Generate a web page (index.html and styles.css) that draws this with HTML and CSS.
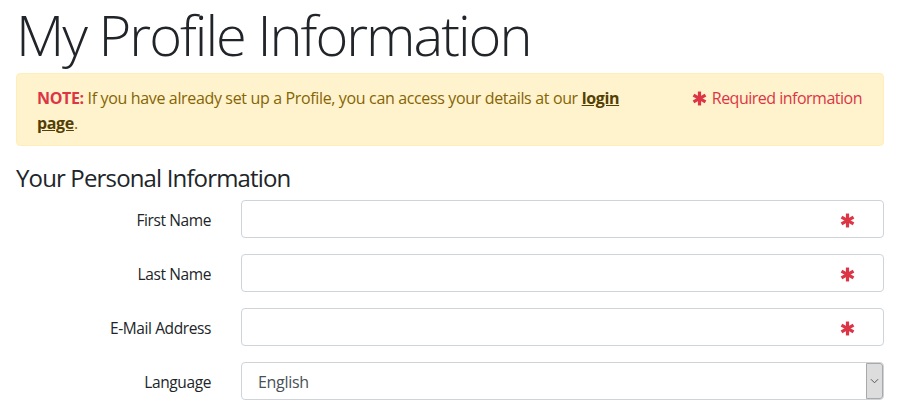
FILE: index.html
```html
<!DOCTYPE html>
<html lang="en">
<head>
<meta charset="utf-8">
<title>My Profile Information</title>
<link rel="stylesheet" href="styles.css">
</head>
<body>
<main class="page">
  <h1 class="title">My Profile Information</h1>

  <div class="alert">
    <p class="alert-note"><strong class="note-label">NOTE:</strong> If you have already set up a Profile, you can access your details at our <a href="#" class="alert-link">login page</a>.</p>
    <p class="alert-req">
      <svg class="star star-sm" viewBox="0 0 14 14" aria-hidden="true"><g stroke="currentColor" stroke-width="3"><line x1="7" y1="0.5" x2="7" y2="13.5"/><line x1="1.4" y1="3.75" x2="12.6" y2="10.25"/><line x1="1.4" y1="10.25" x2="12.6" y2="3.75"/></g></svg>Required information
    </p>
  </div>

  <h2 class="section-title">Your Personal Information</h2>

  <form class="form">
    <div class="form-row">
      <label class="form-label" for="first">First Name</label>
      <div class="field">
        <input class="control" id="first" type="text">
        <svg class="star star-field" viewBox="0 0 14 14" aria-hidden="true"><g stroke="currentColor" stroke-width="3"><line x1="7" y1="0.5" x2="7" y2="13.5"/><line x1="1.4" y1="3.75" x2="12.6" y2="10.25"/><line x1="1.4" y1="10.25" x2="12.6" y2="3.75"/></g></svg>
      </div>
    </div>
    <div class="form-row">
      <label class="form-label" for="last">Last Name</label>
      <div class="field">
        <input class="control" id="last" type="text">
        <svg class="star star-field" viewBox="0 0 14 14" aria-hidden="true"><g stroke="currentColor" stroke-width="3"><line x1="7" y1="0.5" x2="7" y2="13.5"/><line x1="1.4" y1="3.75" x2="12.6" y2="10.25"/><line x1="1.4" y1="10.25" x2="12.6" y2="3.75"/></g></svg>
      </div>
    </div>
    <div class="form-row">
      <label class="form-label" for="email">E-Mail Address</label>
      <div class="field">
        <input class="control" id="email" type="email">
        <svg class="star star-field" viewBox="0 0 14 14" aria-hidden="true"><g stroke="currentColor" stroke-width="3"><line x1="7" y1="0.5" x2="7" y2="13.5"/><line x1="1.4" y1="3.75" x2="12.6" y2="10.25"/><line x1="1.4" y1="10.25" x2="12.6" y2="3.75"/></g></svg>
      </div>
    </div>
    <div class="form-row">
      <label class="form-label" for="lang">Language</label>
      <div class="field">
        <select class="control select" id="lang">
          <option>English</option>
        </select>
        <span class="select-btn" aria-hidden="true">
          <svg viewBox="0 0 10 6" width="9" height="6"><polyline points="1,1 5,5 9,1" fill="none" stroke="#555" stroke-width="1.1"/></svg>
        </span>
      </div>
    </div>
  </form>
</main>
</body>
</html>
```
FILE: styles.css
```css
* {
  box-sizing: border-box;
}

body {
  margin: 0;
  background: #fff;
  color: #212529;
  font-family: "Open Sans", "Noto Sans", sans-serif;
  font-size: 16px;
  line-height: 1.5;
}

.page {
  width: 868px;
  margin-left: 16px;
}

.title {
  margin: 0 0 4px;
  font-size: 56px;
  font-weight: 300;
  line-height: 69px;
  letter-spacing: -2px;
  color: #212529;
}

/* warning box */
.alert {
  display: flex;
  gap: 30px;
  padding: 12px 20px 9px;
  background: #fff3cd;
  border: 1px solid #ffeeba;
  border-radius: 4px;
  color: #856404;
  line-height: 25px;
}

.alert p {
  margin: 0;
}

.alert-note {
  width: 612px;
  letter-spacing: -0.35px;
}

.note-label {
  color: #dc3545;
  font-weight: 700;
}

.alert-link {
  color: #533f03;
  font-weight: 700;
  text-decoration: underline;
}

.alert-req {
  flex: 1;
  text-align: right;
  color: #dc3545;
  white-space: nowrap;
  letter-spacing: -0.5px;
  padding-right: 1px;
}

.star {
  color: #dc3545;
  display: inline-block;
}

.star-sm {
  width: 15px;
  height: 15px;
  margin-right: 5px;
  vertical-align: -2px;
}

.section-title {
  margin: 17px 0 8px;
  font-size: 24px;
  font-weight: 400;
  line-height: 29px;
  letter-spacing: -0.85px;
  color: #212529;
}

/* form grid */
.form {
  display: flex;
  flex-direction: column;
  gap: 16px;
}

.form-row {
  display: grid;
  grid-template-columns: 195px 1fr;
  column-gap: 30px;
  align-items: center;
}

.form-label {
  padding-top: 4px;
  text-align: right;
  font-size: 15.5px;
  letter-spacing: -0.4px;
  color: #212529;
}

.field {
  position: relative;
}

.control {
  display: block;
  width: 100%;
  height: 38px;
  padding: 0 16px;
  border: 1px solid #ced4da;
  border-radius: 4px;
  background: #fff;
  font-family: inherit;
  font-size: 16px;
  letter-spacing: -0.3px;
  color: #495057;
  outline: none;
}

.select {
  appearance: none;
  -webkit-appearance: none;
  padding-top: 2px;
}

.star-field {
  position: absolute;
  right: 29px;
  top: 13px;
  width: 15px;
  height: 15px;
}

.select-btn {
  position: absolute;
  right: 1px;
  top: 1px;
  bottom: 1px;
  width: 17px;
  display: flex;
  align-items: center;
  justify-content: center;
  background: #dddddd;
  border: 1px solid #a9a9a9;
  border-radius: 0 3px 3px 0;
  pointer-events: none;
}
```
